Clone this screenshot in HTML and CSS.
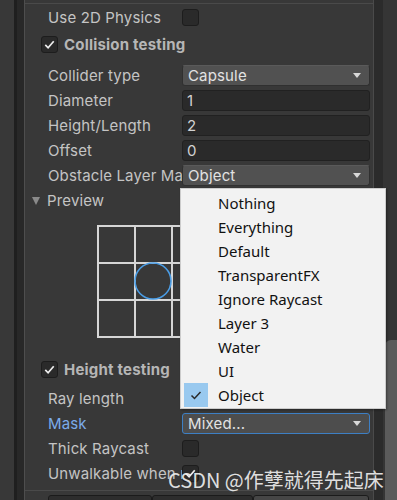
FILE: index.html
```html
<!DOCTYPE html>
<html>
<head>
<meta charset="utf-8">
<link rel="stylesheet" href="styles.css">
</head>
<body>
<div class="window">
  <div class="gutter"></div>
  <div class="gutter-dark"></div>
  <div class="gutter-mid"></div>
  <div class="gutter-line"></div>
  <div class="inspector">
    <div class="top-line"></div>
    <div class="row r-first">
      <span class="label">Use 2D Physics</span>
      <span class="checkbox"></span>
    </div>
    <div class="header h-collision">
      <span class="checkbox checked"><svg viewBox="0 0 16 16" class="tick"><path d="M3.5 8.5 L6.5 11.5 L12.5 4.5"/></svg></span>
      <span class="header-text">Collision testing</span>
    </div>
    <div class="row r-after-header">
      <span class="label">Collider type</span>
      <span class="dropdown"><span>Capsule</span><span class="arrow"></span></span>
    </div>
    <div class="row">
      <span class="label">Diameter</span>
      <span class="input">1</span>
    </div>
    <div class="row">
      <span class="label">Height/Length</span>
      <span class="input">2</span>
    </div>
    <div class="row">
      <span class="label">Offset</span>
      <span class="input">0</span>
    </div>
    <div class="row">
      <span class="label clip">Obstacle Layer Mask</span>
      <span class="dropdown"><span>Object</span><span class="arrow"></span></span>
    </div>
    <div class="foldout">
      <span class="fold-arrow"></span>
      <span class="label">Preview</span>
    </div>
    <div class="preview">
      <svg class="grid" width="120" height="113" viewBox="0 0 120 113">
        <g stroke="#d6d6d6" stroke-width="2" fill="none">
          <line x1="1" y1="0" x2="1" y2="113"/>
          <line x1="38" y1="0" x2="38" y2="113"/>
          <line x1="75" y1="0" x2="75" y2="113"/>
          <line x1="112" y1="0" x2="112" y2="113"/>
          <line x1="0" y1="1" x2="120" y2="1"/>
          <line x1="0" y1="38" x2="120" y2="38"/>
          <line x1="0" y1="75" x2="120" y2="75"/>
          <line x1="0" y1="112" x2="120" y2="112"/>
        </g>
        <circle cx="56" cy="56" r="18" stroke="#4a9de6" stroke-width="1.6" fill="none"/>
      </svg>
    </div>
    <div class="header h-height">
      <span class="checkbox checked"><svg viewBox="0 0 16 16" class="tick"><path d="M3.5 8.5 L6.5 11.5 L12.5 4.5"/></svg></span>
      <span class="header-text">Height testing</span>
    </div>
    <div class="row r-after-header2">
      <span class="label">Ray length</span>
    </div>
    <div class="row">
      <span class="label mask">Mask</span>
      <span class="dropdown focused"><span>Mixed...</span><span class="arrow"></span></span>
    </div>
    <div class="row">
      <span class="label">Thick Raycast</span>
      <span class="checkbox"></span>
    </div>
    <div class="row">
      <span class="label clip">Unwalkable when no ground</span>
      <span class="checkbox checked"><svg viewBox="0 0 16 16" class="tick"><path d="M3.5 8.5 L6.5 11.5 L12.5 4.5"/></svg></span>
    </div>
    <div class="bottom">
      <span class="btn b1"></span>
      <span class="btn b2"></span>
      <span class="btn b3"></span>
    </div>
  </div>
  <div class="vline"></div>
  <div class="rightstrip">
    <div class="scroll-thumb"></div>
  </div>
</div>

<div class="popup">
  <div class="item">Nothing</div>
  <div class="item">Everything</div>
  <div class="item">Default</div>
  <div class="item">TransparentFX</div>
  <div class="item">Ignore Raycast</div>
  <div class="item">Layer 3</div>
  <div class="item">Water</div>
  <div class="item">UI</div>
  <div class="item selected"><span class="sel-mark"><svg viewBox="0 0 24 24"><path d="M7.5 12.5 L10.5 15.5 L16.5 9" /></svg></span>Object</div>
</div>

<div class="watermark">CSDN @作孽就得先起床</div>
</body>
</html>
```

FILE: styles.css
```css
html, body {
  margin: 0;
  padding: 0;
  background: #383838;
  width: 397px;
  height: 500px;
  overflow: hidden;
  font-family: Inter, "Noto Sans", sans-serif;
}

.window {
  display: flex;
  height: 500px;
  position: relative;
}

.gutter { width: 14px; background: #383838; }
.gutter-dark { width: 3px; background: #1f1f1f; }
.gutter-mid { width: 7px; background: #282828; }
.gutter-line { width: 1px; background: #4e4e4e; }

.inspector {
  width: 348px;
  background: #383838;
  display: flex;
  flex-direction: column;
  overflow: hidden;
}

.inspector > * { flex: none; }

.top-line {
  margin-top: 3px;
  height: 1px;
  background: #4a4a4a;
}

.row {
  height: 25px;
  display: flex;
  align-items: center;
  padding-left: 23px;
  padding-right: 3px;
}

.r-first { margin-top: 1px; }
.r-after-header { margin-top: 6px; }
.r-after-header2 { margin-top: 4px; }

.label {
  width: 134px;
  flex: none;
  color: #c4c4c4;
  font-size: 15px;
  letter-spacing: 0.15px;
  white-space: nowrap;
  overflow: hidden;
}

.label.mask { color: #7babea; }

.header {
  height: 25px;
  display: flex;
  align-items: center;
  padding-left: 16px;
}

.h-collision { margin-top: 2px; }
.h-height { margin-top: 19px; }

.header-text {
  margin-left: 6px;
  color: #b6b6b6;
  font-weight: 700;
  font-size: 15px;
  letter-spacing: 0.2px;
}

.checkbox {
  width: 17px;
  height: 17px;
  box-sizing: border-box;
  background: #2a2a2a;
  border: 1px solid #1d1d1d;
  border-radius: 3px;
  display: inline-flex;
  align-items: center;
  justify-content: center;
  flex: none;
}

.tick {
  width: 15px;
  height: 15px;
}
.tick path {
  fill: none;
  stroke: #eeeeee;
  stroke-width: 1.8;
}

.dropdown {
  flex: 1;
  height: 21px;
  box-sizing: border-box;
  background: #515151;
  border: 1px solid #303030;
  border-top-color: #5a5a5a;
  border-radius: 3px;
  display: flex;
  align-items: center;
  justify-content: space-between;
  padding: 0 8px 0 5px;
  color: #e2e2e2;
  font-size: 15px;
  letter-spacing: 0.15px;
}

.dropdown.focused {
  border: 1px solid #3d7fc4;
  background: #4d4d4d;
}

.arrow {
  width: 0;
  height: 0;
  border-left: 4.5px solid transparent;
  border-right: 4.5px solid transparent;
  border-top: 5px solid #d8d8d8;
}

.input {
  flex: 1;
  height: 21px;
  box-sizing: border-box;
  background: #2a2a2a;
  border: 1px solid #212121;
  border-radius: 3px;
  display: flex;
  align-items: center;
  padding-left: 4px;
  color: #d2d2d2;
  font-size: 15px;
}

.foldout {
  height: 25px;
  display: flex;
  align-items: center;
  padding-left: 7px;
}

.fold-arrow {
  width: 0;
  height: 0;
  border-left: 4.5px solid transparent;
  border-right: 4.5px solid transparent;
  border-top: 8px solid #8a8a8a;
  margin-right: 7px;
}

.preview {
  margin-top: 12px;
  padding-left: 72px;
  height: 113px;
}

.grid { display: block; }

.bottom {
  margin-top: 4px;
  border-top: 1px solid #4a4a4a;
  display: flex;
  padding-top: 4px;
  padding-left: 23px;
  height: 10px;
}

.btn {
  height: 12px;
  box-sizing: border-box;
  border: 1px solid #1b1b1b;
  border-radius: 3px;
}
.b1 { width: 104px; background: #2d2d2d; }
.b2 { width: 101px; background: #2d2d2d; }
.b3 { width: 116px; background: #464646; }

.vline { width: 1px; background: #4a4a4a; }

.rightstrip {
  width: 23px;
  display: flex;
  justify-content: flex-end;
  align-items: flex-end;
  background: linear-gradient(to right, #2b2b2b 0 9px, #353535 9px);
}

.scroll-thumb {
  width: 12px;
  height: 160px;
  background: #5b5b5b;
  border-radius: 6px 0 0 0;
}

.popup {
  position: absolute;
  left: 180px;
  top: 188px;
  width: 206px;
  height: 221px;
  box-sizing: border-box;
  background: #f2f2f2;
  border: 1px solid #cccccc;
  box-shadow: 1px 1px 2px rgba(0,0,0,0.35);
  padding-top: 2px;
}

.item {
  height: 24px;
  display: flex;
  align-items: center;
  padding-left: 37px;
  font-family: "Noto Sans", "Noto Sans CJK SC", sans-serif;
  font-size: 15px;
  color: #111;
  position: relative;
}

.sel-mark {
  position: absolute;
  left: 3px;
  top: 0;
  width: 24px;
  height: 24px;
  background: #99c9ef;
}
.sel-mark svg { width: 24px; height: 24px; display: block; }
.sel-mark path { fill: none; stroke: #2a2a2a; stroke-width: 1.5; }

.watermark {
  position: absolute;
  left: 168px;
  top: 465px;
  font-family: "Noto Sans CJK SC", sans-serif;
  font-size: 20px;
  color: rgba(240,240,240,0.92);
  white-space: nowrap;
}
```
